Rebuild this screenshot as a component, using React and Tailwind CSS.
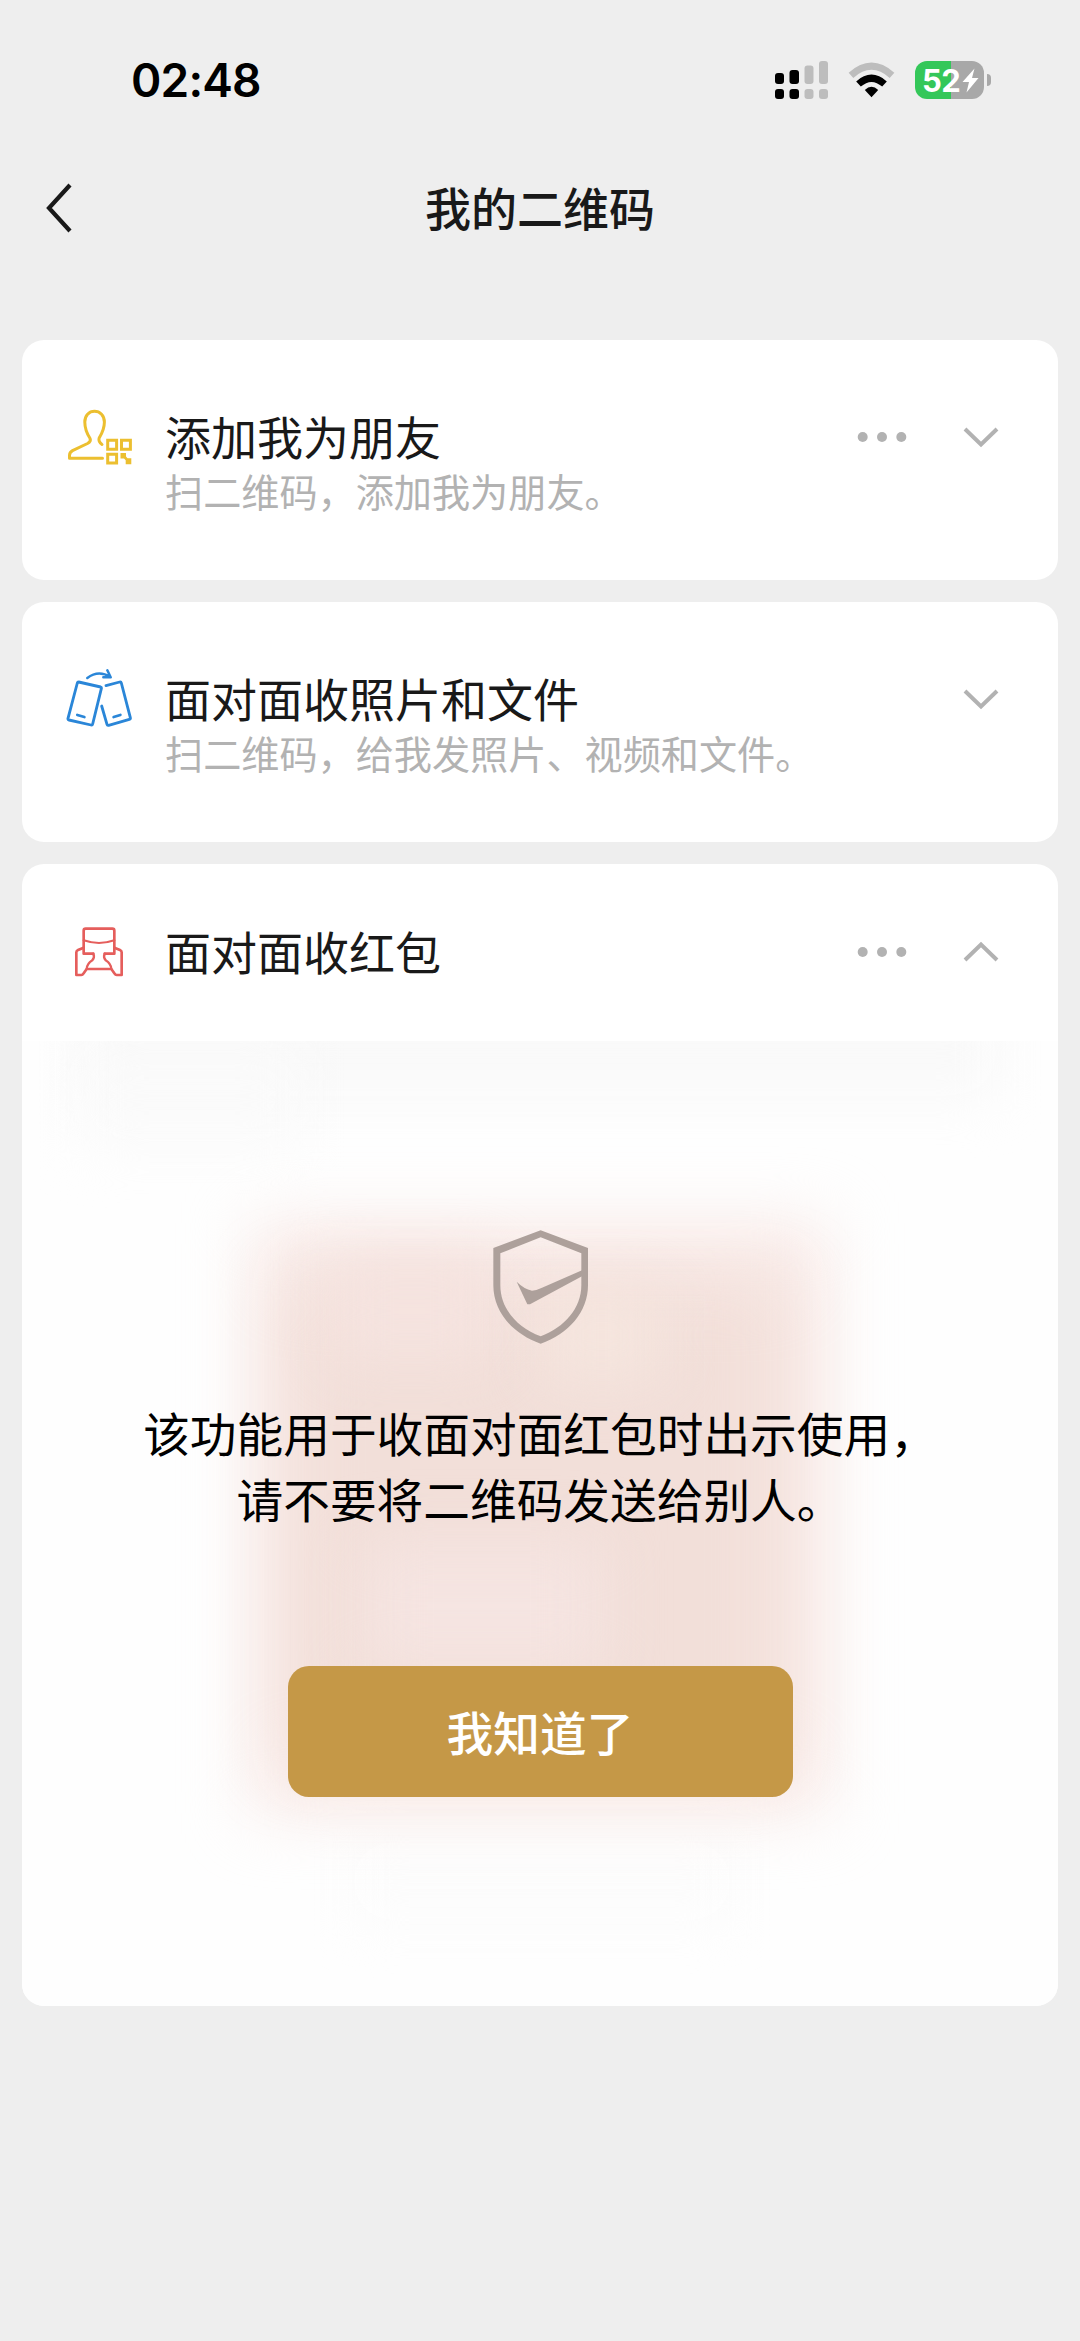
import React from 'react';

const PersonQrIcon = () => (
  <svg width="68" height="60" viewBox="66.500 407 68 60" fill="none" stroke="#ecbf30" strokeWidth="3" strokeLinecap="round" strokeLinejoin="round">
    <path d="M103 458.300H70V455.500Q70 452.300 73 450.600L88 443.500Q91.800 441.500 90.600 438.500C88 434.500 85.300 429.500 85.300 422C85.300 415.500 89.500 411.200 95 411.200S104.900 415.500 104.900 422C104.900 429.500 102 434 99.600 438.200Q98.700 442 102.500 444.400" />
    <path d="M108.200 440.300h8.900v8.900h-8.900zM122 440.300h8.900v8.900h-8.900zM108.200 454.200h8.900v8.900h-8.900z" strokeLinejoin="miter" />
    <path d="M121 453h5.500v3.500l1.500 1.700h3.800v6h-5.600v-4l-1.700-1.800H121z" fill="#ecbf30" stroke="none" />
  </svg>
);

const PhonesIcon = () => (
  <svg width="68" height="60" viewBox="48 83 204 180" fill="none" stroke="#2a86d8" strokeWidth="8.500" strokeLinecap="round" strokeLinejoin="round">
    <path d="M86 122L152 137Q155 138 154 142L128 248Q127 252 123 251L57 236Q53 235 54 231L82 125Q83 121 86 122Z" />
    <path d="M168 133L209 122Q213 121 214 125L241 229Q242 233 238 234L176 252Q172 253 171 249L155 194" />
    <path d="M112 110Q145 85 181 107M172 87L182 108L160 108" strokeWidth="7.500" />
    <path d="M82 221L103 227M191 227L211 221" />
  </svg>
);

const PacketIcon = () => (
  <svg width="68" height="60" viewBox="48 65 204 180" fill="none" stroke="#e55e5c" strokeWidth="8" strokeLinecap="round" strokeLinejoin="round">
    <path d="M130 160H101V91Q101 85 107 85H187Q193 85 193 91V160H164" />
    <path d="M101 120Q147 136 193 120" strokeWidth="6.500" />
    <path d="M101 142L84 149Q79 151 79 156V224H94Q98 224 100 220L110 206H184L194 220Q196 224 200 224H215V156Q215 151 210 149L193 142" />
    <path d="M130 160Q135 170 127 180Q111 190 110 206M164 160Q159 170 167 180Q183 190 184 206" strokeWidth="7" />
  </svg>
);

const MoreDots = () => (
  <svg width="50" height="12" viewBox="0 0 50 12" fill="#b2b2b2">
    <circle cx="5.700" cy="6" r="5" />
    <circle cx="25" cy="6" r="5" />
    <circle cx="44.300" cy="6" r="5" />
  </svg>
);

const Chevron = ({ up }) => (
  <svg width="36" height="22" viewBox="0 0 36 22" fill="none" stroke="#b2b2b2" strokeWidth="4">
    <path d={up ? 'M2 19L18 3.500L34 19' : 'M2 3L18 18.500L34 3'} />
  </svg>
);

const StatusBar = () => (
  <div className="flex h-[160px] items-start justify-between pl-[131px] pr-[89px] pt-[58px]">
    <span className="font-[Inter,sans-serif] text-[46px] font-semibold leading-[45px] tracking-[-0.800px] text-black">02:48</span>
    <div className="flex pt-[2px]">
      {/* Dual SIM signal */}
      <svg width="56" height="40" viewBox="774 60 56 40">
        <g fill="#000">
          <rect x="775" y="73" width="9" height="11" rx="3" />
          <rect x="789.500" y="70" width="9.500" height="14" rx="3" />
          <rect x="775" y="89" width="9" height="10" rx="3" />
          <rect x="789.500" y="89" width="9.500" height="10" rx="3" />
        </g>
        <g fill="#bdbdbd">
          <rect x="804.500" y="65.500" width="9" height="18.500" rx="3" />
          <rect x="819" y="61" width="9" height="23" rx="3" />
          <rect x="804.500" y="89" width="9" height="10" rx="3" />
          <rect x="819" y="89" width="9" height="10" rx="3" />
        </g>
      </svg>
      {/* Wifi */}
      <svg className="ml-[18px]" width="48" height="40" viewBox="848 60 48 40" fill="none" strokeWidth="7">
        <path d="M851 75.300Q871.500 57 892 75.300" stroke="#bdbdbd" />
        <path d="M858.500 84Q871.500 72.500 884.500 84" stroke="#000" />
        <path d="M871.500 97.300L864.800 90Q871.500 83.500 878.200 90Z" fill="#000" />
      </svg>
      {/* Battery */}
      <div className="relative ml-[19px] mt-px flex h-[38px] w-[69px] items-center overflow-hidden rounded-[12px] bg-[linear-gradient(90deg,#34c759_52%,#a8a8a8_52%)] pl-[7px]">
        <span className="font-[Inter,sans-serif] text-[31px] font-bold leading-none tracking-[-0.500px] text-white">52</span>
        <svg className="absolute left-[47px] top-[7px]" width="17" height="25" viewBox="0 0 17 25" fill="#fff">
          <path d="M12.500 0.500L0.500 14H7L4.500 24.500L16.500 10H10Z" />
        </svg>
      </div>
      <div className="ml-[3px] mt-[14px] h-[12px] w-[4px] rounded-r-full bg-[#a8a8a8]" />
    </div>
  </div>
);

const CardHeader = ({ icon, title, more, up }) => (
  <div className="flex h-[60px] items-center pl-[44px] pr-[59px]">
    {icon}
    <h2 className="ml-[31px] flex-1 pb-[4px] text-[46px] leading-[56px] text-[#191919]">{title}</h2>
    {more && <MoreDots />}
    <div className="ml-[56px]">
      <Chevron up={up} />
    </div>
  </div>
);

const Card = ({ desc, ...header }) => (
  <section className="h-[240px] rounded-[22px] bg-white pt-[67px]">
    <CardHeader {...header} />
    <p className="-mt-px pl-[143px] text-[38.150px] leading-[50px] text-[#b2b2b2]">{desc}</p>
  </section>
);

const Shield = () => (
  <svg className="ml-[2px]" width="96" height="114" viewBox="159 89 288 342" fill="#ada09b">
    <path fillRule="evenodd" d="M302 90L444 143V255C444 335 385 402 302 430C219 402 160 335 160 255V143ZM302 111L181 159V255C181 325 231 381 302 408C373 381 424 325 424 255V159Z" />
    <path d="M230 244Q252 266 276 271Q290 270 306 262L426 210V228L270 312H262Z" />
  </svg>
);

const App = () => {
  return (
    <div lang="zh-CN" className="h-[2341px] w-[1080px] overflow-hidden bg-[#eeeeee] font-['Noto_Sans_CJK_SC',sans-serif]">
      <StatusBar />

      <header className="grid h-[96px] grid-cols-[160px_1fr_160px] items-center">
        <svg className="ml-[45px]" width="28" height="50" viewBox="0 0 28 50" fill="none" stroke="#191919" strokeWidth="4.200">
          <path d="M25 2L4 25L25 48" />
        </svg>
        <h1 className="pb-[4px] text-center text-[46px] font-medium leading-[60px] text-[#191919]">我的二维码</h1>
      </header>

      <main className="mt-[84px] flex flex-col gap-[22px] px-[22px]">
        <Card icon={<PersonQrIcon />} title="添加我为朋友" desc="扫二维码，添加我为朋友。" more />
        <Card icon={<PhonesIcon />} title="面对面收照片和文件" desc="扫二维码，给我发照片、视频和文件。" />

        <section className="h-[1142px] overflow-hidden rounded-[22px] bg-white pt-[58px]">
          <CardHeader icon={<PacketIcon />} title="面对面收红包" more up />

          <div className="relative mt-[59px] h-[965px] overflow-hidden bg-[#fefefe]">
            {/* Blurred code behind the notice */}
            <div className="absolute -top-[30px] left-[60px] h-[85px] w-[916px] bg-[#f9f9f9] blur-[26px]" />
            <div className="absolute left-[60px] top-[10px] h-[90px] w-[220px] bg-[#fafafa] blur-[28px]" />
            <div className="absolute left-[330px] top-[800px] h-[80px] w-[380px] bg-[#fcfcfc] blur-[24px]" />
            <div className="absolute left-[230px] top-[182px] h-[590px] w-[576px] bg-[#f9ebe8] blur-[32px]" />
            <div className="absolute left-[262px] top-[240px] h-[480px] w-[502px] bg-[#f2dfd9] blur-[34px]" />
            <div className="absolute left-[310px] top-[220px] h-[100px] w-[160px] bg-[#f5e3df] blur-[28px]" />
            <div className="absolute left-[520px] top-[250px] h-[90px] w-[120px] bg-[#f5e5de] blur-[28px]" />
            <div className="absolute left-[340px] top-[500px] h-[130px] w-[240px] bg-[#f5e4e1] blur-[30px]" />

            <div className="relative flex flex-col items-center pt-[189px]">
              <Shield />
              <p className="mt-[55px] text-center text-[46.700px] leading-[66px] text-black">
                该功能用于收面对面红包时出示使用，
                <br />
                请不要将二维码发送给别人。
              </p>
              <button className="mt-[135px] h-[131px] w-[505px] rounded-[21px] bg-[#c59847] text-[46.700px] font-medium leading-none text-white">
                我知道了
              </button>
            </div>
          </div>
        </section>
      </main>
    </div>
  );
};

export default App;
